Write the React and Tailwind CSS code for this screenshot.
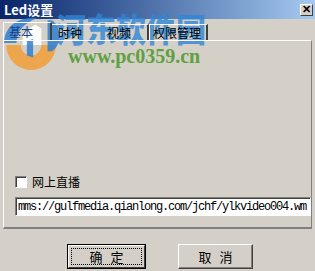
export default function App() {
  const cjk = { fontFamily: '"Noto Sans CJK SC", "Liberation Sans", sans-serif' };
  return (
    <div className="relative w-[315px] h-[271px] overflow-hidden bg-[#d4d0c8] text-black" style={cjk}>
      {/* Title bar */}
      <div className="flex h-[19px] items-center justify-between bg-gradient-to-r from-[#0a246a] to-[#a6caf0] pl-[4px] pr-[2px]">
        <span className="text-[13px] font-bold leading-none text-white">Led设置</span>
        <div className="flex h-[12px] w-[13px] items-center justify-center border border-t-white border-l-white border-r-[#404040] border-b-[#404040] bg-[#d4d0c8] text-[11px] font-bold leading-none text-black" style={{ fontFamily: '"Liberation Sans", sans-serif' }}>
          ✕
        </div>
      </div>

      {/* Watermark (over title bar, under tab texts) */}
      <svg className="absolute left-[0px] top-[14px]" width="60" height="56" viewBox="0 0 58 54">
        <path d="M6 30 A24 24 0 0 0 54 30 L40 30 A10 10 0 0 1 20 30 Z" fill="#f0a040" opacity="0.9" />
        <path d="M4 28 C4 10 20 2 36 4 C24 8 16 16 16 28 Z" fill="#2f7fd0" opacity="0.85" />
        <path d="M22 30 L22 18 L34 10 L40 14 L40 30 Z" fill="#ffffff" opacity="0.9" />
        <path d="M46 6 L50 6 C60 12 60 30 50 36 L46 36 Z" fill="#2f7fd0" opacity="0.85" />
        <path d="M26 40 L26 26 L32 24 L32 42 Z" fill="#2f7fd0" opacity="0.85" />
      </svg>
      <div className="absolute left-[56px] top-[11px] origin-top-left scale-y-[1.1] whitespace-nowrap text-[30px] font-black leading-none text-[#2f86d8] opacity-80">
        河东软件园
      </div>
      <div className="absolute left-[68px] top-[46px] whitespace-nowrap text-[20px] font-bold leading-none text-[#5fa040]" style={{ fontFamily: '"Liberation Serif", serif' }}>
        www.pc0359.cn
      </div>

      {/* Tabs */}
      <div className="relative mt-[3px] flex h-[18px] items-end pl-[3px] text-[12px] leading-none">
        <div className="flex h-[18px] w-[49px] items-center border-l border-t border-white border-r-2 border-r-[#404040] pl-[5px] text-[#1a3f8a]">基本</div>
        <div className="flex h-[16px] w-[48px] items-center border-t border-white pl-[6px]">时钟</div>
        <div className="flex h-[16px] w-[49px] items-center border-t border-white border-r-2 border-r-[#404040] pl-[7px]">视频</div>
        <div className="flex h-[16px] w-[59px] items-center border-l border-t border-white border-r-2 border-r-[#404040] pl-[3px]">权限管理</div>
      </div>

      {/* Panel */}
      <div className="relative ml-[3px] mr-[3px] h-[189px] border-l border-t border-white border-b-2 border-b-[#808080] border-r border-r-[#808080] pt-[135px] pl-[11px]">
        <div className="flex items-center gap-[5px] text-[12px] leading-none">
          <div className="h-[12px] w-[12px] border border-t-[#808080] border-l-[#808080] border-r-white border-b-white bg-white shadow-[inset_1px_1px_0_#404040]"></div>
          <span>网上直播</span>
        </div>
        <div className="mt-[9px] flex h-[19px] w-[296px] items-center border border-t-[#808080] border-l-[#808080] border-r-white border-b-white bg-white pl-[2px] shadow-[inset_1px_1px_0_#404040]">
          <span className="whitespace-nowrap text-[12px] leading-none tracking-[-1.2px]" style={{ fontFamily: '"Liberation Mono", monospace' }}>
            mms://gulfmedia.qianlong.com/jchf/ylkvideo004.wm
          </span>
        </div>
      </div>

      {/* Buttons */}
      <div className="mt-[15px] flex pl-[67px] text-[13px] leading-none">
        <div className="flex h-[25px] w-[79px] items-center justify-center border border-black">
          <div className="flex h-full w-full items-center justify-center border border-t-white border-l-white border-r-[#404040] border-b-[#404040] p-[2px]">
            <div className="flex h-full w-full items-center justify-center border border-dotted border-black tracking-[8px] pl-[8px]">确定</div>
          </div>
        </div>
        <div className="ml-[32px] flex h-[25px] w-[75px] items-center justify-center border border-t-white border-l-white border-r-[#404040] border-b-[#404040] shadow-[inset_-1px_-1px_0_#808080] tracking-[8px] pl-[8px]">
          取消
        </div>
      </div>
    </div>
  );
}
